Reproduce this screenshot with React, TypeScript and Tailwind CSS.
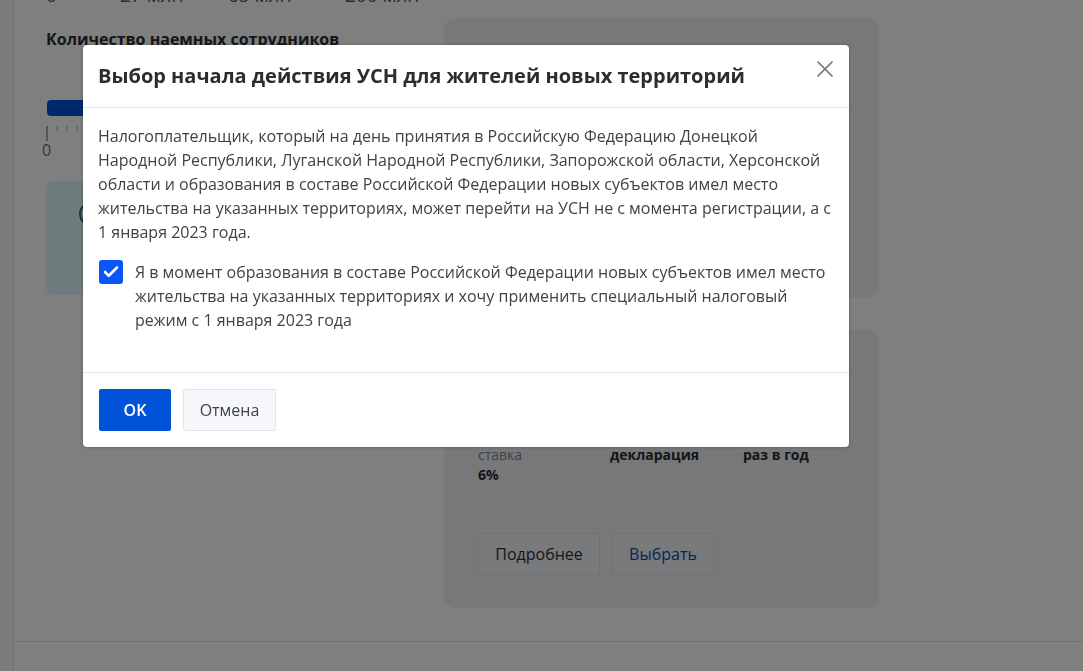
import React from "react";
import { X, Check } from "lucide-react";

const FONT = "font-['Open_Sans','Noto_Sans',sans-serif]";

const SliderLabels: React.FC = () => (
  <div className="flex h-[6px] items-start overflow-hidden text-[19px] leading-[20px] text-[#55575c]">
    <span className="-mt-[15px] w-[74px]">0</span>
    <span className="-mt-[15px] w-[108px]">27 млн</span>
    <span className="-mt-[15px] w-[117px]">65 млн</span>
    <span className="-mt-[15px]">200 млн</span>
  </div>
);

const Ticks: React.FC = () => (
  <div className="mt-[10px] flex h-[15px] items-start gap-[8px]">
    <div className="h-[15px] w-[2px] bg-[#a8aab0]" />
    {[0, 1, 2].map((i) => (
      <div key={i} className="h-[5px] w-[2px] bg-[#d0d2d6]" />
    ))}
  </div>
);

const LeftColumn: React.FC = () => (
  <div className="w-[398px] shrink-0">
    <SliderLabels />
    <h3 className="mt-[21px] text-[16px] font-bold leading-[24px] text-[#2b2d33]">
      Количество наемных сотрудников
    </h3>
    <div className="ml-px mt-[49px] h-[16px] w-[300px] rounded-[4px] bg-[#0052d9]" />
    <Ticks />
    <div className="-ml-[4px] -mt-[1px] text-[16px] leading-[20px] text-[#6c6e73]">0</div>
    <div className="mt-[21px] flex h-[114px] w-[300px] items-start rounded-[8px] bg-[#dcf6f8] pl-[33px] pt-[21px]">
      <div className="h-[24px] w-[24px] rounded-full border-2 border-[#2f6b6e]" />
    </div>
  </div>
);

const RightColumn: React.FC = () => (
  <div className="flex w-[435px] shrink-0 flex-col gap-[32px] pt-[18px]">
    <div className="h-[280px] rounded-[12px] bg-[#eef0f4]" />
    <div className="flex h-[278px] flex-col rounded-[12px] bg-[#eef0f4] px-[34px] pt-[114px]">
      <div className="grid grid-cols-[132px_133px_1fr] text-[14px] leading-[21px]">
        <div>
          <div className="text-[#84878d]">ставка</div>
          <div className="-mt-px font-bold text-[#2b2d33]">6%</div>
        </div>
        <div className="font-bold text-[#2b2d33]">декларация</div>
        <div className="font-bold text-[#2b2d33]">раз в год</div>
      </div>
      <div className="mt-[48px] flex gap-[12px]">
        <button className="h-[42px] w-[122px] rounded-[2px] border border-[#e2e4e9] bg-[#f2f4f8] text-[16px] text-[#2b2d33]">
          Подробнее
        </button>
        <button className="h-[42px] w-[102px] rounded-[2px] border border-[#e2e4e9] bg-[#f2f4f8] text-[16px] text-[#0d47b8]">
          Выбрать
        </button>
      </div>
    </div>
  </div>
);

const Modal: React.FC = () => (
  <div className="fixed inset-0 bg-black/50 pl-[83px] pt-[45px]">
    <div className="flex h-[402px] w-[766px] flex-col rounded-[4px] bg-white shadow-[0_0_3px_rgba(0,0,0,0.35)]">
      <div className="flex h-[63px] shrink-0 items-start justify-between border-b border-[#e2e4e9] pl-[15px] pr-[10px]">
        <h2 className="pt-[15px] text-[20px] font-bold leading-[32px] text-[#2b2d33]">
          Выбор начала действия УСН для жителей новых территорий
        </h2>
        <X className="mt-[10px] h-[28px] w-[28px] text-[#767880]" strokeWidth={1.5} />
      </div>
      <div className="flex-1 px-[16px] pt-[16px] text-[16px] leading-[24px] text-[#3f4249]">
        <p className="-ml-px">
          Налогоплательщик, который на день принятия в Российскую Федерацию Донецкой Народной
          Республики, Луганской Народной Республики, Запорожской области, Херсонской области и
          образования в составе Российской Федерации новых субъектов имел место жительства на
          указанных территориях, может перейти на УСН не с момента регистрации, а с 1 января 2023
          года.
        </p>
        <div className="mt-[16px] flex gap-[12px]">
          <div className="flex h-[24px] w-[24px] shrink-0 items-center justify-center rounded-[3px] bg-[#0a55f5]">
            <Check className="h-[18px] w-[18px] text-white" strokeWidth={3.5} />
          </div>
          <p>
            Я в момент образования в составе Российской Федерации новых субъектов имел место
            жительства на указанных территориях и хочу применить специальный налоговый режим с 1
            января 2023 года
          </p>
        </div>
      </div>
      <div className="flex h-[75px] shrink-0 items-center gap-[12px] border-t border-[#e2e4e9] px-[16px]">
        <button className="h-[42px] w-[72px] rounded-[2px] bg-[#0052d9] text-[16px] font-semibold text-white">
          OK
        </button>
        <button className="h-[42px] w-[93px] rounded-[2px] border border-[#e2e4e9] bg-[#f5f7fa] text-[16px] text-[#3f4249]">
          Отмена
        </button>
      </div>
    </div>
  </div>
);

export default function App() {
  return (
    <div className={`${FONT} flex h-[671px] w-[1083px] overflow-hidden bg-white`}>
      <div className="w-[14px] shrink-0 border-r border-[#e2e4e9] bg-[#f4f6f8]" />
      <div className="flex min-w-0 flex-1 flex-col">
        <div className="flex h-[642px] shrink-0 border-b border-[#dfe1e5] pl-[32px]">
          <LeftColumn />
          <RightColumn />
        </div>
      </div>
      <Modal />
    </div>
  );
}
